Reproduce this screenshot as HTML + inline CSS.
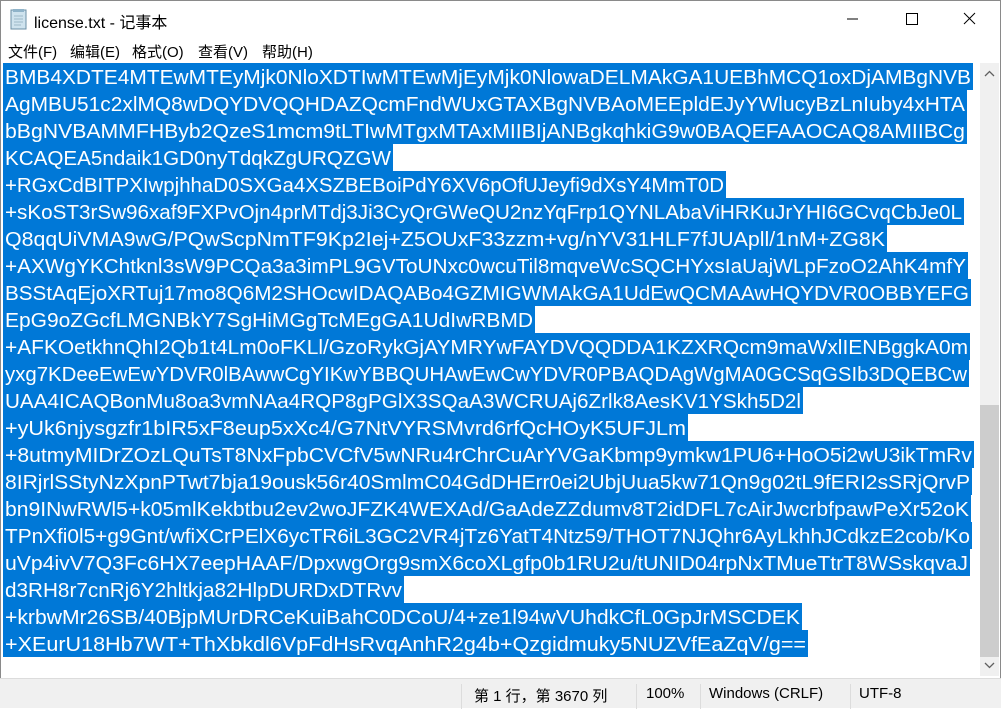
<!DOCTYPE html>
<html><head><meta charset="utf-8"><style>
body{margin:0;width:1001px;height:707px;overflow:hidden;background:#fff;font-family:"Liberation Sans","Noto Sans CJK SC",sans-serif;position:relative}
.win{position:absolute;left:0;top:0;width:999px;height:705px;border:1px solid #8a8a8a;background:#fff}
.title{position:absolute;left:34px;top:9px;font-size:16px;color:#000}
.menu span{position:absolute;top:41px;font-size:15px}
.sb{position:absolute;left:980px;top:63px;width:19px;height:613px;background:#f0f0f0}
.status{position:absolute;left:0;top:678px;width:1001px;height:29px;background:#f0f0f0;border-top:1px solid #dcdcdc;font-size:15px}
.status div{position:absolute;top:5px}
.sep{position:absolute;top:2px;width:1px;height:25px;background:#dcdcdc}
</style></head><body>
<div class="win"></div>
<svg style="position:absolute;left:10px;top:8px" width="18" height="22" viewBox="0 0 18 22"><rect x="1" y="2" width="15" height="19" fill="#cfe3ee" stroke="#6b8fa6"/><rect x="3" y="1" width="11" height="3" fill="#8fb3c9"/><path d="M4 8h9M4 11h9M4 14h9M4 17h7" stroke="#9db8c8"/></svg>
<div class="title">license.txt - 记事本</div>
<svg style="position:absolute;left:840px;top:10px" width="160" height="20"><path d="M7 9h11" stroke="#000"/><rect x="66.5" y="3.5" width="11" height="11" fill="none" stroke="#000"/><path d="M124 3l11 11M135 3l-11 11" stroke="#000"/></svg>
<div class="menu"><span style="left:8px">文件(F)</span><span style="left:70px">编辑(E)</span><span style="left:132px">格式(O)</span><span style="left:198px">查看(V)</span><span style="left:262px">帮助(H)</span></div>
<svg style="position:absolute;left:0;top:63px" width="980" height="600" font-family="Liberation Sans, sans-serif" font-size="20" fill="#fff">
<g fill="#0078d7">
<rect x="3" y="0" width="970" height="27"/><rect x="3" y="27" width="964" height="27"/><rect x="3" y="54" width="964" height="27"/><rect x="3" y="81" width="390" height="27"/><rect x="3" y="108" width="723" height="27"/><rect x="3" y="135" width="961" height="27"/><rect x="3" y="162" width="884" height="27"/><rect x="3" y="189" width="965" height="27"/><rect x="3" y="216" width="968" height="27"/><rect x="3" y="243" width="532" height="27"/><rect x="3" y="270" width="967" height="27"/><rect x="3" y="297" width="966" height="27"/><rect x="3" y="324" width="800" height="27"/><rect x="3" y="351" width="685" height="27"/><rect x="3" y="378" width="971" height="27"/><rect x="3" y="405" width="969" height="27"/><rect x="3" y="432" width="968" height="27"/><rect x="3" y="459" width="969" height="27"/><rect x="3" y="486" width="967" height="27"/><rect x="3" y="513" width="401" height="27"/><rect x="3" y="540" width="799" height="27"/><rect x="3" y="567" width="805" height="27"/>
</g>
<g>
<text x="5" y="21" textLength="966" lengthAdjust="spacingAndGlyphs">BMB4XDTE4MTEwMTEyMjk0NloXDTIwMTEwMjEyMjk0NlowaDELMAkGA1UEBhMCQ1oxDjAMBgNVB</text>
<text x="5" y="48" textLength="960" lengthAdjust="spacingAndGlyphs">AgMBU51c2xlMQ8wDQYDVQQHDAZQcmFndWUxGTAXBgNVBAoMEEpldEJyYWlucyBzLnIuby4xHTA</text>
<text x="5" y="75" textLength="960" lengthAdjust="spacingAndGlyphs">bBgNVBAMMFHByb2QzeS1mcm9tLTIwMTgxMTAxMIIBIjANBgkqhkiG9w0BAQEFAAOCAQ8AMIIBCg</text>
<text x="5" y="102" textLength="386" lengthAdjust="spacingAndGlyphs">KCAQEA5ndaik1GD0nyTdqkZgURQZGW</text>
<text x="5" y="129" textLength="719" lengthAdjust="spacingAndGlyphs">+RGxCdBITPXIwpjhhaD0SXGa4XSZBEBoiPdY6XV6pOfUJeyfi9dXsY4MmT0D</text>
<text x="5" y="156" textLength="957" lengthAdjust="spacingAndGlyphs">+sKoST3rSw96xaf9FXPvOjn4prMTdj3Ji3CyQrGWeQU2nzYqFrp1QYNLAbaViHRKuJrYHI6GCvqCbJe0L</text>
<text x="5" y="183" textLength="880" lengthAdjust="spacingAndGlyphs">Q8qqUiVMA9wG/PQwScpNmTF9Kp2Iej+Z5OUxF33zzm+vg/nYV31HLF7fJUApll/1nM+ZG8K</text>
<text x="5" y="210" textLength="961" lengthAdjust="spacingAndGlyphs">+AXWgYKChtknl3sW9PCQa3a3imPL9GVToUNxc0wcuTil8mqveWcSQCHYxsIaUajWLpFzoO2AhK4mfY</text>
<text x="5" y="237" textLength="964" lengthAdjust="spacingAndGlyphs">BSStAqEjoXRTuj17mo8Q6M2SHOcwIDAQABo4GZMIGWMAkGA1UdEwQCMAAwHQYDVR0OBBYEFG</text>
<text x="5" y="264" textLength="528" lengthAdjust="spacingAndGlyphs">EpG9oZGcfLMGNBkY7SgHiMGgTcMEgGA1UdIwRBMD</text>
<text x="5" y="291" textLength="963" lengthAdjust="spacingAndGlyphs">+AFKOetkhnQhI2Qb1t4Lm0oFKLl/GzoRykGjAYMRYwFAYDVQQDDA1KZXRQcm9maWxlIENBggkA0m</text>
<text x="5" y="318" textLength="962" lengthAdjust="spacingAndGlyphs">yxg7KDeeEwEwYDVR0lBAwwCgYIKwYBBQUHAwEwCwYDVR0PBAQDAgWgMA0GCSqGSIb3DQEBCw</text>
<text x="5" y="345" textLength="796" lengthAdjust="spacingAndGlyphs">UAA4ICAQBonMu8oa3vmNAa4RQP8gPGlX3SQaA3WCRUAj6Zrlk8AesKV1YSkh5D2l</text>
<text x="5" y="372" textLength="681" lengthAdjust="spacingAndGlyphs">+yUk6njysgzfr1bIR5xF8eup5xXc4/G7NtVYRSMvrd6rfQcHOyK5UFJLm</text>
<text x="5" y="399" textLength="967" lengthAdjust="spacingAndGlyphs">+8utmyMIDrZOzLQuTsT8NxFpbCVCfV5wNRu4rChrCuArYVGaKbmp9ymkw1PU6+HoO5i2wU3ikTmRv</text>
<text x="5" y="426" textLength="965" lengthAdjust="spacingAndGlyphs">8IRjrlSStyNzXpnPTwt7bja19ousk56r40SmlmC04GdDHErr0ei2UbjUua5kw71Qn9g02tL9fERI2sSRjQrvP</text>
<text x="5" y="453" textLength="964" lengthAdjust="spacingAndGlyphs">bn9INwRWl5+k05mlKekbtbu2ev2woJFZK4WEXAd/GaAdeZZdumv8T2idDFL7cAirJwcrbfpawPeXr52oK</text>
<text x="5" y="480" textLength="965" lengthAdjust="spacingAndGlyphs">TPnXfi0l5+g9Gnt/wfiXCrPElX6ycTR6iL3GC2VR4jTz6YatT4Ntz59/THOT7NJQhr6AyLkhhJCdkzE2cob/Ko</text>
<text x="5" y="507" textLength="963" lengthAdjust="spacingAndGlyphs">uVp4ivV7Q3Fc6HX7eepHAAF/DpxwgOrg9smX6coXLgfp0b1RU2u/tUNID04rpNxTMueTtrT8WSskqvaJ</text>
<text x="5" y="534" textLength="397" lengthAdjust="spacingAndGlyphs">d3RH8r7cnRj6Y2hltkja82HlpDURDxDTRvv</text>
<text x="5" y="561" textLength="795" lengthAdjust="spacingAndGlyphs">+krbwMr26SB/40BjpMUrDRCeKuiBahC0DCoU/4+ze1l94wVUhdkCfL0GpJrMSCDEK</text>
<text x="5" y="588" textLength="801" lengthAdjust="spacingAndGlyphs">+XEurU18Hb7WT+ThXbkdl6VpFdHsRvqAnhR2g4b+Qzgidmuky5NUZVfEaZqV/g==</text>
</g></svg>
<div class="sb"><div style="position:absolute;left:0;top:342px;width:19px;height:252px;background:#cdcdcd"></div>
<svg style="position:absolute;left:4px;top:7px" width="11" height="8"><path d="M1 6l4.5-4.5L10 6" stroke="#606060" fill="none" stroke-width="1.3"/></svg>
<svg style="position:absolute;left:4px;top:598px" width="11" height="8"><path d="M1 2l4.5 4.5L10 2" stroke="#606060" fill="none" stroke-width="1.3"/></svg></div>
<div class="status">
<div class="sep" style="left:461px"></div><div class="sep" style="left:636px"></div><div class="sep" style="left:700px"></div><div class="sep" style="left:850px"></div>
<div style="left:474px;top:6px">第 1 行，第 3670 列</div><div style="left:646px;top:6px">100%</div><div style="left:709px;top:6px">Windows (CRLF)</div><div style="left:859px;top:6px">UTF-8</div>
</div>
</body></html>
